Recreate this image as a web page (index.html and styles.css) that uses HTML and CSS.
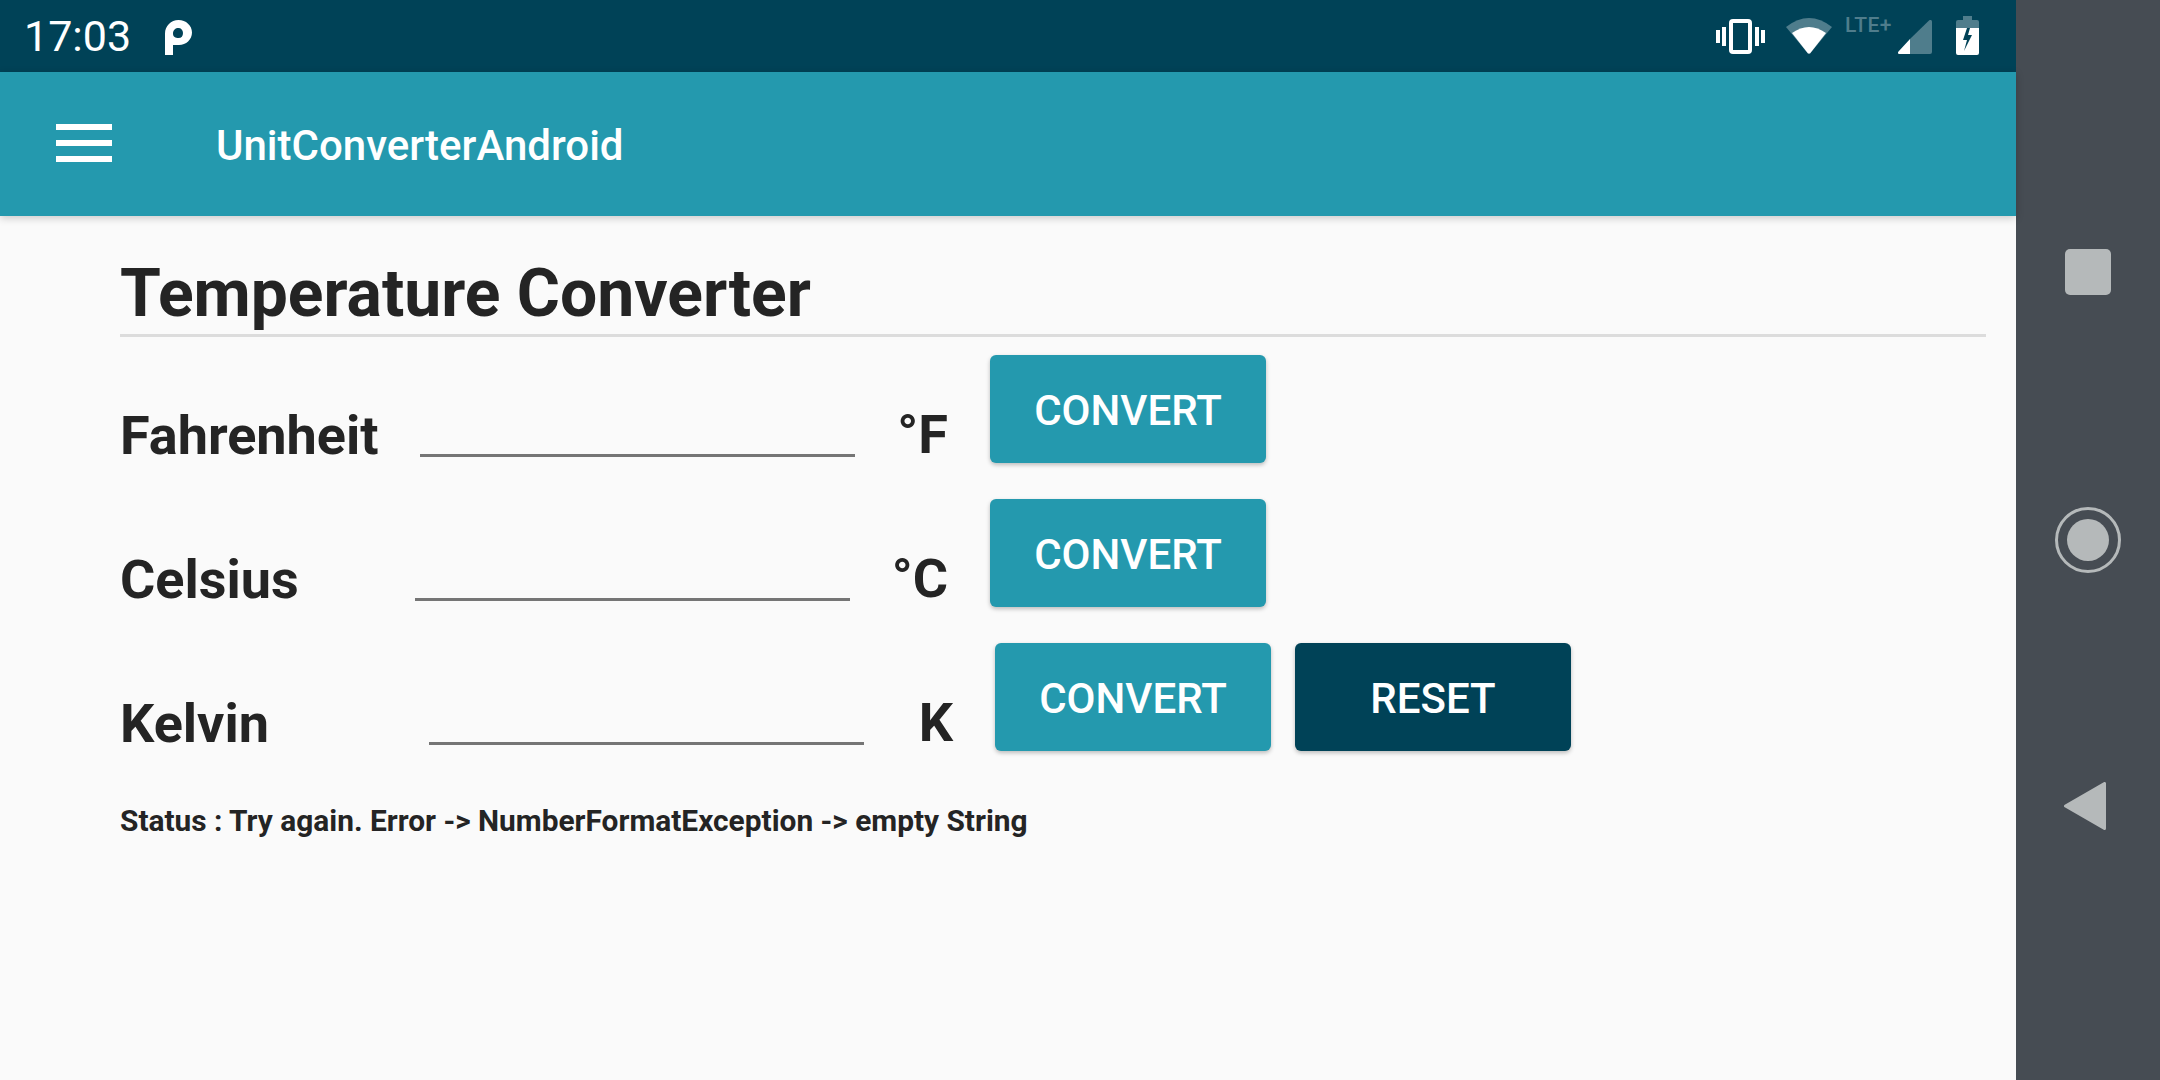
FILE: index.html
```html
<!DOCTYPE html>
<html>
<head>
  <title>UnitConverterAndroid</title>
  <link rel="stylesheet" href="styles.css">
</head>
<body>
  <div class="screen">
    <div class="app">
      <div class="status-bar">
        <span class="clock">17:03</span>
        <svg class="p-logo" width="27" height="35" viewBox="0 0 27 35">
          <path fill="#fff" fill-rule="evenodd" d="M0 13.500C0 6 6 0 13.500 0S27 5.500 27 12.500 21 25 14 25H8v10H0zM13.500 8C10.500 8 8 10 8 13.500S10.500 18 13.500 18 18 16 18 13S16 8 13.500 8z"/>
        </svg>
        <div class="status-icons">
          <svg class="vibrate" width="49" height="35" viewBox="0 0 49 35">
            <rect x="15" y="2" width="19" height="31" rx="2" fill="none" stroke="#fff" stroke-width="4"/>
            <path fill="#fff" d="M0 11h4v13H0zM6 8h4v19H6zM39 8h4v19h-4zM45 11h4v13h-4z"/>
          </svg>
          <svg class="wifi" width="46" height="36" viewBox="0 0 46 36">
            <path fill="#4f7d8c" d="M0 9Q23-9 46 9L24 35.500h-2z"/>
            <path fill="#fff" d="M6 15Q23 3 40 15L24 35.500h-2z"/>
          </svg>
          <span class="lte">LTE+</span>
          <svg class="signal" width="34" height="34" viewBox="0 0 34 34">
            <path fill="#4f7d8c" d="M31 .500c1.500-1 3-.500 3 1.500v30a2 2 0 0 1-2 2H12V19z"/>
            <path fill="#fff" d="M12 19v15H1.500C0 34-.500 32.500.500 31.500z"/>
          </svg>
          <svg class="battery" width="23" height="39" viewBox="0 0 23 39">
            <path fill="#4f7d8c" d="M7 0h9v4h5a2 2 0 0 1 2 2v6H0V6a2 2 0 0 1 2-2h5z"/>
            <path fill="#fff" fill-rule="evenodd" d="M0 12h23v25a2 2 0 0 1-2 2H2a2 2 0 0 1-2-2zM11 12L7 24h4L8 35l8-16h-4l2-7z"/>
          </svg>
        </div>
      </div>
      <header class="app-bar">
        <div class="menu-icon"><span></span><span></span><span></span></div>
        <span class="app-title">UnitConverterAndroid</span>
      </header>
      <main class="content">
        <h1 class="page-title">Temperature Converter</h1>
        <div class="row">
          <label class="label label-f">Fahrenheit</label>
          <div class="field"></div>
          <span class="unit unit-f">°F</span>
          <button class="btn">CONVERT</button>
        </div>
        <div class="row">
          <label class="label label-c">Celsius</label>
          <div class="field"></div>
          <span class="unit unit-c">°C</span>
          <button class="btn">CONVERT</button>
        </div>
        <div class="row">
          <label class="label label-k">Kelvin</label>
          <div class="field"></div>
          <span class="unit unit-k">K</span>
          <button class="btn">CONVERT</button>
          <button class="btn btn-dark">RESET</button>
        </div>
        <p class="status-text">Status : Try again. Error -&gt; NumberFormatException -&gt; empty String</p>
      </main>
    </div>
    <nav class="nav-bar">
      <div class="nav-square"></div>
      <svg width="68" height="68" viewBox="0 0 68 68">
        <circle cx="34" cy="34" r="31.500" fill="none" stroke="#b5b9ba" stroke-width="3"/>
        <circle cx="34" cy="34" r="21" fill="#b5b9ba"/>
      </svg>
      <svg class="nav-back" width="42" height="48" viewBox="0 0 42 48">
        <path fill="#b5b9ba" stroke="#b5b9ba" stroke-width="3" stroke-linejoin="round" d="M1.500 24L40.500 1.500v45z"/>
      </svg>
    </nav>
  </div>
</body>
</html>
```

FILE: styles.css
```css
* {
  box-sizing: border-box;
}

body {
  margin: 0;
  font-family: Roboto, sans-serif;
  background-color: #fafafa;
}

.screen {
  display: flex;
  width: 2160px;
  height: 1080px;
  overflow: hidden;
}

.app {
  flex: 1;
  display: flex;
  flex-direction: column;
}

/* status bar */
.status-bar {
  display: flex;
  align-items: center;
  height: 72px;
  padding: 0 37px 0 24px;
  background-color: #004257;
  color: #fff;
}

.clock {
  font-size: 43px;
}

.p-logo {
  margin: 3px 0 0 34px;
}

.status-icons {
  display: flex;
  align-items: flex-start;
  align-self: stretch;
  margin-left: auto;
}

.vibrate {
  margin-top: 19px;
}

.wifi {
  margin: 18px 0 0 21px;
}

.lte {
  margin: 13px 0 0 13px;
  font-size: 21px;
  font-weight: 500;
  letter-spacing: 0.5px;
  color: #4f7d8c;
}

.signal {
  margin: 20px 0 0 6px;
}

.battery {
  margin: 16px 0 0 24px;
}

/* app bar */
.app-bar {
  position: relative;
  display: flex;
  align-items: center;
  height: 144px;
  padding-left: 56px;
  background-color: #2499ae;
  box-shadow: 0 2px 8px rgba(0, 0, 0, 0.2);
  color: #fff;
}

.menu-icon {
  display: flex;
  flex-direction: column;
  gap: 10px;
  width: 56px;
  margin-top: -2px;
}

.menu-icon span {
  height: 6px;
  background-color: #fff;
}

.app-title {
  margin: 2px 0 0 104px;
  font-size: 42px;
  font-weight: 500;
}

/* converter */
.content {
  padding: 0 30px 0 120px;
  color: #242424;
}

.page-title {
  margin: 0;
  height: 121px;
  padding-top: 39px;
  border-bottom: 3px solid #dcdcdc;
  font-size: 66px;
  font-weight: 700;
  line-height: 77px;
}

.row {
  display: flex;
  align-items: flex-end;
  height: 108px;
  margin-top: 18px;
}

.row + .row {
  margin-top: 36px;
}

.label {
  margin-bottom: -4px;
  font-size: 54px;
  font-weight: 700;
  line-height: 63px;
}

.label-f {
  width: 300px;
}

.label-c {
  width: 295px;
}

.label-k {
  width: 309px;
}

.field {
  width: 435px;
  height: 3px;
  margin-bottom: 6px;
  background-color: #757575;
}

.unit {
  margin-bottom: -3px;
  padding-right: 42px;
  font-size: 54px;
  font-weight: 700;
  line-height: 63px;
  text-align: right;
}

.unit-f {
  width: 135px;
}

.unit-c {
  width: 140px;
}

.unit-k {
  width: 131px;
}

.btn {
  width: 276px;
  height: 108px;
  margin-right: 24px;
  padding: 2px 0 0;
  border: none;
  border-radius: 6px;
  background-color: #2499ae;
  box-shadow: 0 2px 4px rgba(0, 0, 0, 0.25);
  color: #fff;
  font-family: Roboto, sans-serif;
  font-size: 42px;
  font-weight: 500;
}

.btn-dark {
  background-color: #004257;
}

.status-text {
  margin: 52px 0 0;
  font-size: 29.87px;
  font-weight: 700;
}

/* navigation */
.nav-bar {
  display: flex;
  flex-direction: column;
  align-items: center;
  width: 144px;
  padding-top: 249px;
  gap: 211px;
  background-color: #464c53;
}

.nav-square {
  width: 46px;
  height: 46px;
  border-radius: 5px;
  background-color: #b5b9ba;
}

.nav-back {
  margin: -3px 6px 0 0;
}
```
